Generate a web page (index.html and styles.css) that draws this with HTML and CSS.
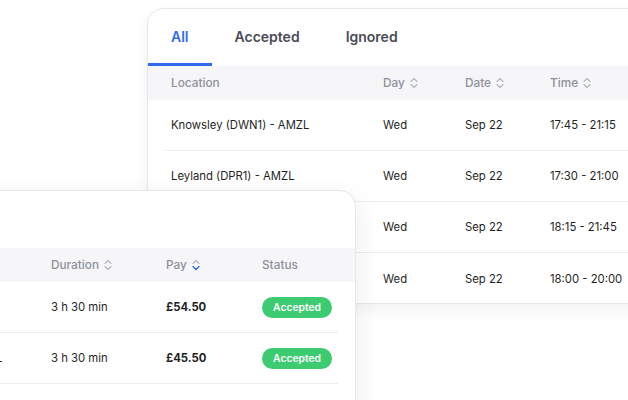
FILE: index.html
```html
<!DOCTYPE html>
<html>
<head>
<meta charset="utf-8">
<link rel="stylesheet" href="styles.css">
</head>
<body>
<div class="canvas">
  <section class="card card-top">
    <nav class="tabs">
      <div class="tab active">All</div>
      <div class="tab">Accepted</div>
      <div class="tab">Ignored</div>
    </nav>
    <div class="thead cols-top">
      <div>Location</div>
      <div class="sort">Day <svg class="chev" viewBox="0 0 8 12"><path d="M1 4.5 4 1.5 7 4.5"/><path d="M1 7.5 4 10.5 7 7.5"/></svg></div>
      <div class="sort">Date <svg class="chev" viewBox="0 0 8 12"><path d="M1 4.5 4 1.5 7 4.5"/><path d="M1 7.5 4 10.5 7 7.5"/></svg></div>
      <div class="sort">Time <svg class="chev" viewBox="0 0 8 12"><path d="M1 4.5 4 1.5 7 4.5"/><path d="M1 7.5 4 10.5 7 7.5"/></svg></div>
    </div>
    <div class="tbody">
      <div class="row cols-top"><div>Knowsley (DWN1) - AMZL</div><div>Wed</div><div>Sep 22</div><div>17:45 - 21:15</div></div>
      <div class="row cols-top"><div>Leyland (DPR1) - AMZL</div><div>Wed</div><div>Sep 22</div><div>17:30 - 21:00</div></div>
      <div class="row cols-top"><div>Knowsley (DWN1) - AMZL</div><div>Wed</div><div>Sep 22</div><div>18:15 - 21:45</div></div>
      <div class="row cols-top last"><div>Leyland (DPR1) - AMZL</div><div>Wed</div><div>Sep 22</div><div>18:00 - 20:00</div></div>
    </div>
  </section>

  <section class="card card-bottom">
    <div class="blank"></div>
    <div class="thead cols-bottom">
      <div>Location</div>
      <div class="sort">Duration <svg class="chev" viewBox="0 0 8 12"><path d="M1 4.5 4 1.5 7 4.5"/><path d="M1 7.5 4 10.5 7 7.5"/></svg></div>
      <div class="sort">Pay <svg class="chev" viewBox="0 0 8 12"><path d="M1 4.5 4 1.5 7 4.5"/><path class="on" d="M1 7.5 4 10.5 7 7.5"/></svg></div>
      <div>Status</div>
    </div>
    <div class="tbody">
      <div class="row cols-bottom"><div>Leyland (DPR1) - AMZL</div><div>3 h 30 min</div><div class="pay">£54.50</div><div><span class="badge">Accepted</span></div></div>
      <div class="row cols-bottom"><div>Knowsley (DWN1) - AMZL</div><div>3 h 30 min</div><div class="pay">£45.50</div><div><span class="badge">Accepted</span></div></div>
    </div>
  </section>
</div>
</body>
</html>
```
FILE: styles.css
```css
* { box-sizing: border-box; }
html, body {
  margin: 0;
  padding: 0;
  background: #ffffff;
  width: 628px;
  height: 400px;
  overflow: hidden;
  font-family: Inter, "Noto Sans", sans-serif;
  color: #1e1f24;
}
.canvas {
  position: relative;
  width: 628px;
  height: 400px;
  overflow: hidden;
}
.card {
  position: absolute;
  background: #fff;
  border: 1px solid #e7e7ec;
  border-radius: 16px;
  overflow: hidden;
}
.card-top {
  left: 147px;
  top: 8px;
  width: 560px;
  height: 296px;
  box-shadow: 0 6px 14px rgba(30, 30, 60, 0.06);
}
.card-bottom {
  left: -160px;
  top: 190px;
  width: 516px;
  height: 260px;
  box-shadow: 0 8px 24px rgba(30, 30, 60, 0.09);
}
.tabs {
  display: flex;
  height: 57px;
}
.tab {
  display: flex;
  align-items: center;
  padding: 1px 23px 0;
  font-size: 14px;
  font-weight: 600;
  color: #4b4c55;
  border-bottom: 3px solid transparent;
}
.tab.active {
  color: #2f6bec;
  border-bottom-color: #2f6bec;
}
.blank { height: 57px; }
.thead {
  background: #f6f6f9;
  height: 34px;
  align-items: center;
  padding-left: 23px;
  font-size: 11.8px;
  font-weight: 500;
  color: #8d8f9c;
}
.cols-top {
  display: grid;
  grid-template-columns: 212px 82px 85px 1fr;
}
.cols-bottom {
  display: grid;
  grid-template-columns: 187px 115px 96px 1fr;
}
.sort {
  display: flex;
  align-items: center;
  gap: 5px;
}
.chev {
  width: 8px;
  height: 12px;
  fill: none;
  stroke: #b3b5c0;
  stroke-width: 1.1;
  stroke-linecap: round;
  stroke-linejoin: round;
}
.chev .on { stroke: #2f6bec; stroke-width: 1.4; }
.row {
  margin: 0 17px;
  padding-left: 6px;
  height: 51px;
  align-items: center;
  border-bottom: 1px solid #ececf0;
  font-size: 11.3px;
  color: #1e1f24;
}
.row.last { border-bottom: none; }
.pay { font-weight: 700; }
.badge {
  display: inline-flex;
  align-items: center;
  justify-content: center;
  width: 70px;
  height: 21px;
  border-radius: 11px;
  background: #3dcb71;
  color: #fff;
  font-size: 10.3px;
  font-weight: 600;
}
```
